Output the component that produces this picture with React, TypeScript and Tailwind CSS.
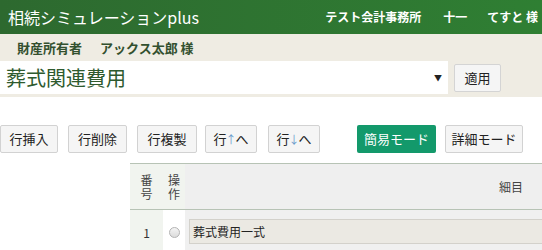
import React from 'react';

const font = { fontFamily: '"Noto Sans CJK JP", "Noto Sans", sans-serif' };

const ToolButton: React.FC<{ className?: string; children: React.ReactNode }> = ({ className = '', children }) => (
  <button
    className={`h-[28px] flex items-center justify-center rounded-[2px] border border-[#d2d2d2] bg-[#f5f5f5] text-[13px] text-[#222] ${className}`}
  >
    {children}
  </button>
);

const App: React.FC = () => {
  return (
    <div className="w-full h-[250px] overflow-hidden bg-white" style={font}>
      {/* Top bar */}
      <div className="h-[34px] flex items-center justify-between pl-[8px] pr-[4px] bg-gradient-to-r from-[#2d692f] to-[#2f7f33] text-white">
        <span className="text-[16px] leading-none">相続シミュレーションplus</span>
        <div className="flex items-center text-[12px] font-bold leading-none">
          <span>テスト会計事務所</span>
          <span className="ml-[22px]">十一</span>
          <span className="ml-[20px]">てすと 様</span>
        </div>
      </div>

      {/* Owner + category selector */}
      <div className="bg-[#efece3] pb-[3px]">
        <div className="h-[27px] flex items-center pl-[17px] text-[13px] font-bold text-[#33502f]">
          <span>財産所有者</span>
          <span className="ml-[18px]">アックス太郎 様</span>
        </div>
        <div className="flex items-center">
          <div className="w-[448px] h-[33px] bg-white flex items-center justify-between pl-[6px] pr-[6px]">
            <span className="text-[20px] leading-none text-[#2e5a2e]">葬式関連費用</span>
            <span className="text-[8px] text-[#222]">▼</span>
          </div>
          <button className="ml-[6px] w-[47px] h-[28px] flex items-center justify-center rounded-[2px] border border-[#d4d4d4] bg-[#f5f5f5] text-[13px] text-[#222]">
            適用
          </button>
        </div>
      </div>

      {/* Row actions */}
      <div className="mt-[28px] flex items-center">
        <ToolButton className="w-[58px]">行挿入</ToolButton>
        <ToolButton className="ml-[10px] w-[59px]">行削除</ToolButton>
        <ToolButton className="ml-[10px] w-[60px]">行複製</ToolButton>
        <ToolButton className="ml-[8px] w-[52px]">
          行<span className="text-[#6c9ccc] text-[11px] mx-[-1px]">↑</span>へ
        </ToolButton>
        <ToolButton className="ml-[11px] w-[52px]">
          行<span className="text-[#6c9ccc] text-[11px] mx-[-1px]">↓</span>へ
        </ToolButton>
        <button className="ml-[37px] w-[79px] h-[28px] flex items-center justify-center rounded-[2px] bg-[#13996b] text-[13px] text-white">
          簡易モード
        </button>
        <ToolButton className="ml-[9px] w-[78px]">詳細モード</ToolButton>
      </div>

      {/* Table */}
      <div className="mt-[10px] ml-[130px] w-[720px]">
        <div className="flex h-[47px] border-t border-b border-[#b7c3b5] text-[12px] text-[#444]">
          <div className="w-[33px] bg-[#f1f4ef] flex items-center justify-center">
            <span className="w-[12px] leading-[14px] break-all text-center">番号</span>
          </div>
          <div className="w-[22px] bg-[#f1f4ef] flex items-center justify-center">
            <span className="w-[12px] leading-[14px] break-all text-center">操作</span>
          </div>
          <div className="w-[652px] bg-[#efefef] flex items-center justify-center">細目</div>
        </div>
        <div className="flex h-[45px] text-[12px] text-[#333]">
          <div className="w-[33px] bg-[#f1f4ef] flex items-center justify-center">1</div>
          <div className="w-[22px] bg-white flex items-center justify-center">
            <span className="w-[11px] h-[11px] rounded-full border border-[#b3b3b3] bg-gradient-to-b from-[#f4f4f4] to-[#dcdcdc]" />
          </div>
          <div className="w-[652px] bg-[#f0f0f0] pt-[9px] pl-[4px]">
            <div className="h-[25px] border border-[#d3d1cb] bg-[#ebe9e3] flex items-center pl-[3px] text-[#222]">
              葬式費用一式
            </div>
          </div>
        </div>
      </div>
    </div>
  );
};

export default App;
